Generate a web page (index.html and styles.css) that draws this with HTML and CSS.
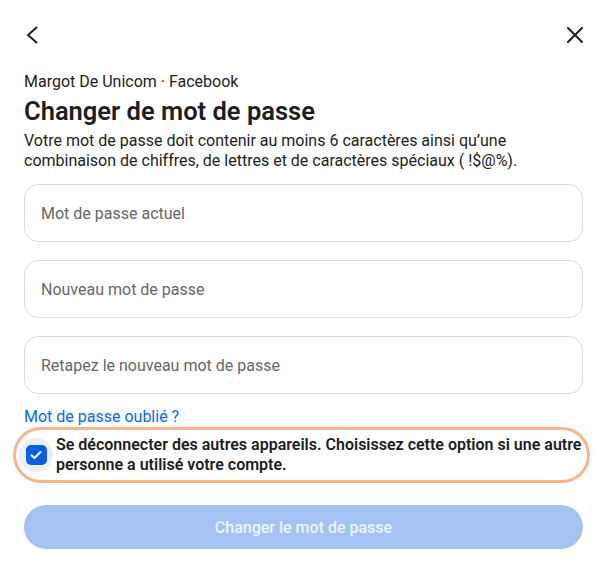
FILE: index.html
```html
<!DOCTYPE html>
<html lang="fr">
<head>
<meta charset="utf-8">
<link rel="stylesheet" href="styles.css">
</head>
<body>
<div class="page">
  <div class="topbar">
    <button class="icon-btn back" aria-label="Retour">
      <svg width="16" height="18" viewBox="0 0 16 18"><path d="M12.5 1.5 L4 9 L12.5 16.5" fill="none" stroke="#1c1e21" stroke-width="2" stroke-linecap="round" stroke-linejoin="round"/></svg>
    </button>
    <button class="icon-btn close" aria-label="Fermer">
      <svg width="16" height="16" viewBox="0 0 16 16"><path d="M1 1 L15 15 M15 1 L1 15" fill="none" stroke="#1c1e21" stroke-width="2" stroke-linecap="round"/></svg>
    </button>
  </div>
  <div class="account">Margot De Unicom · Facebook</div>
  <h1 class="title">Changer de mot de passe</h1>
  <p class="desc">Votre mot de passe doit contenir au moins 6 caractères ainsi qu’une combinaison de chiffres, de lettres et de caractères spéciaux ( !$@%).</p>
  <div class="fields">
    <div class="field">Mot de passe actuel</div>
    <div class="field">Nouveau mot de passe</div>
    <div class="field">Retapez le nouveau mot de passe</div>
  </div>
  <a class="forgot" href="#">Mot de passe oublié ?</a>
  <div class="logout-box">
    <span class="check-wrap">
      <span class="check">
        <svg width="12" height="10" viewBox="0 0 12 10"><path d="M1.5 5.2 L4.5 8 L10.5 2" fill="none" stroke="#fff" stroke-width="2" stroke-linecap="round" stroke-linejoin="round"/></svg>
      </span>
    </span>
    <span class="logout-text">Se déconnecter des autres appareils. Choisissez cette option si une autre personne a utilisé votre compte.</span>
  </div>
  <button class="submit">Changer le mot de passe</button>
</div>
</body>
</html>
```
FILE: styles.css
```css
* { box-sizing: border-box; }
html, body { margin: 0; padding: 0; background: #fff; }
body {
  font-family: Roboto, "Liberation Sans", sans-serif;
  color: #1c1e21;
  width: 605px;
  height: 567px;
  overflow: hidden;
}
.page {
  padding: 0 22px 0 24px;
}
.topbar {
  display: flex;
  justify-content: space-between;
  align-items: center;
  height: 70px;
}
.icon-btn {
  border: 0;
  background: none;
  padding: 0;
  display: flex;
  align-items: center;
  justify-content: center;
}
.account {
  font-size: 16px;
  line-height: 20px;
  margin-top: 2px;
  color: #1c1e21;
}
.title {
  font-size: 25.5px;
  font-weight: 600;
  line-height: 30px;
  margin: 4px 0 0;
}
.desc {
  font-size: 16px;
  line-height: 20px;
  margin: 5px 0 0;
  padding-right: 4px;
}
.fields {
  display: flex;
  flex-direction: column;
  gap: 18px;
  margin-top: 13px;
}
.field {
  height: 58px;
  border: 1px solid #dadde1;
  border-radius: 14px;
  display: flex;
  align-items: center;
  padding-left: 16px;
  font-size: 16px;
  color: #65676b;
}
.forgot {
  display: block;
  margin-top: 13px;
  font-size: 16px;
  line-height: 20px;
  color: #0866ff;
  text-decoration: none;
}
.logout-box {
  display: flex;
  align-items: center;
  gap: 3px;
  margin: 0 -7px 0 -11px;
  height: 56px;
  border: 3px solid #f9b48f;
  border-radius: 28px;
  padding-left: 3px;
}
.check-wrap {
  width: 34px;
  height: 34px;
  border-radius: 50%;
  background: #eeeff1;
  display: flex;
  align-items: center;
  justify-content: center;
  flex: none;
}
.check {
  width: 21px;
  height: 20px;
  border-radius: 5px;
  background: #0a5fe8;
  display: flex;
  align-items: center;
  justify-content: center;
}
.logout-text {
  font-size: 16px;
  font-weight: 600;
  line-height: 20px;
  color: #1c1e21;
}
.submit {
  display: block;
  width: 100%;
  margin-top: 22px;
  height: 44px;
  border: 0;
  border-radius: 22px;
  background: #a5c3f2;
  color: #eef4fd;
  font-family: Roboto, "Liberation Sans", sans-serif;
  font-size: 16px;
  font-weight: 500;
}
```
